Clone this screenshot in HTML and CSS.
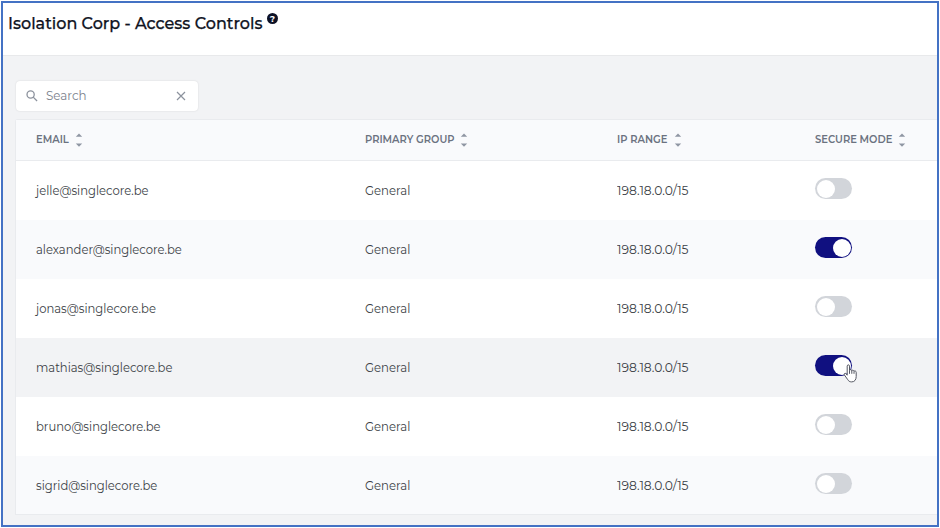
FILE: index.html
```
<!DOCTYPE html>
<html lang="en">
<head>
<meta charset="utf-8">
<title>Isolation Corp - Access Controls</title>
<link rel="stylesheet" href="styles.css">
</head>
<body>
<div class="frame">
  <header class="header">
    <h1 class="title">Isolation Corp - Access Controls</h1>
    <span class="help">?</span>
  </header>
  <main class="content">
    <div class="search">
      <svg class="search-icon" width="12" height="12" viewBox="0 0 13 13"><circle cx="5" cy="4.900" r="3.900"/><path d="M7.800 7.700l4.200 4.200"/></svg>
      <span class="search-text">Search</span>
      <svg class="clear-icon" width="10" height="10" viewBox="0 0 10 10"><path d="M1 1l8 8M9 1l-8 8"/></svg>
    </div>
    <div class="table">
      <div class="row head">
        <div class="cell"><span class="h-email">EMAIL</span><svg class="sort" width="8" height="14" viewBox="0 0 8 14"><path d="M.8 3.8L4 .4l3.200 3.400zM.8 10.400l3.200 3.400 3.200-3.400z"/></svg></div>
        <div class="cell"><span class="h-group">PRIMARY GROUP</span><svg class="sort" width="8" height="14" viewBox="0 0 8 14"><path d="M.8 3.8L4 .4l3.200 3.400zM.8 10.400l3.200 3.400 3.200-3.400z"/></svg></div>
        <div class="cell"><span class="h-range">IP RANGE</span><svg class="sort" width="8" height="14" viewBox="0 0 8 14"><path d="M.8 3.8L4 .4l3.200 3.400zM.8 10.400l3.200 3.400 3.200-3.400z"/></svg></div>
        <div class="cell"><span class="h-mode">SECURE MODE</span><svg class="sort" width="8" height="14" viewBox="0 0 8 14"><path d="M.8 3.8L4 .4l3.200 3.400zM.8 10.400l3.200 3.400 3.200-3.400z"/></svg></div>
      </div>
      <div class="row"><div class="cell"><span class="email">jelle@singlecore.be</span></div><div class="cell"><span class="group">General</span></div><div class="cell"><span class="ip">198.18.0.0/15</span></div><div class="cell"><span class="toggle"></span></div></div>
      <div class="row alt"><div class="cell"><span class="email">alexander@singlecore.be</span></div><div class="cell"><span class="group">General</span></div><div class="cell"><span class="ip">198.18.0.0/15</span></div><div class="cell"><span class="toggle on"></span></div></div>
      <div class="row"><div class="cell"><span class="email">jonas@singlecore.be</span></div><div class="cell"><span class="group">General</span></div><div class="cell"><span class="ip">198.18.0.0/15</span></div><div class="cell"><span class="toggle"></span></div></div>
      <div class="row hover"><div class="cell"><span class="email">mathias@singlecore.be</span></div><div class="cell"><span class="group">General</span></div><div class="cell"><span class="ip">198.18.0.0/15</span></div><div class="cell"><span class="toggle on"><svg class="cursor" width="15" height="19" viewBox="0 0 15 19"><path d="M4.200 11.200V2.100c0-1.700 2.300-1.700 2.300 0v4.400c.3-1.200 2.200-1.100 2.300.3.500-1 2.100-.7 2.200.6.600-.9 2.200-.5 2.200.9v4.200c0 3.200-1.600 5.400-4.500 5.400-2.200 0-3.200-.9-4.200-2.600L1.300 10.800c-.6-1.200.8-2 1.700-1.100zM6.500 6.500v3.300M8.800 6.800v3M11 7.400v2.400"/></svg></span></div></div>
      <div class="row"><div class="cell"><span class="email">bruno@singlecore.be</span></div><div class="cell"><span class="group">General</span></div><div class="cell"><span class="ip">198.18.0.0/15</span></div><div class="cell"><span class="toggle"></span></div></div>
      <div class="row alt"><div class="cell"><span class="email">sigrid@singlecore.be</span></div><div class="cell"><span class="group">General</span></div><div class="cell"><span class="ip">198.18.0.0/15</span></div><div class="cell"><span class="toggle"></span></div></div>
    </div>
  </main>
</div>
</body>
</html>
```
FILE: styles.css
```
* { box-sizing: border-box; }
body {
  margin: 0;
  padding: 1px;
  height: 528px;
  overflow: hidden;
  background: #fff;
  font-family: Montserrat, Inter, sans-serif;
  font-size: 12.5px;
  line-height: 16px;
  color: #3b3f46;
}
.frame {
  width: 938px;
  height: 526px;
  border: 2px solid #4472c4;
  background: #f2f3f5;
  overflow: hidden;
}
.header {
  display: flex;
  align-items: flex-start;
  height: 53px;
  padding: 8px 0 0 5px;
  background: #fff;
  border-bottom: 1px solid #e8e9eb;
}
.title {
  margin: 0;
  font-size: 17px;
  line-height: 24px;
  font-weight: 500;
  color: #10141f;
  -webkit-text-stroke: .25px #10141f;
  white-space: nowrap;
  width: 255px;
  transform: scaleX(.941);
  transform-origin: left;
}
.help {
  width: 11px;
  height: 11px;
  margin: 2px 0 0 4px;
  border-radius: 50%;
  background: #0d1226;
  color: #fff;
  font-size: 9px;
  font-weight: 700;
  line-height: 11px;
  text-align: center;
}
.content { padding: 25px 0 0 12px; }
.search {
  display: flex;
  align-items: center;
  width: 182px;
  height: 30px;
  margin-left: 1px;
  padding: 0 12px 0 10px;
  border-radius: 4px;
  background: #fff;
  box-shadow: 0 0 2px rgba(0, 0, 0, .13);
}
.search svg { fill: none; stroke: #8c929d; stroke-width: 1.4; }
.search .clear-icon { stroke-width: 1.2; margin-left: auto; }
.search-text {
  margin-left: 8px;
  color: #7b818c;
  transform: scaleX(.95);
  transform-origin: left;
}
.table {
  margin-top: 8px;
  border: 1px solid #e9ebee;
  border-right: 0;
  border-radius: 3px 0 0 0;
}
.row {
  display: grid;
  grid-template-columns: 329px 252px 198px 1fr;
  height: 59px;
  padding: 0 0 1px 20px;
  background: #fff;
}
.row:last-child { height: 58px; padding-bottom: 0; }
.cell { display: flex; align-items: center; white-space: nowrap; }
.row.head {
  height: 41px;
  padding-bottom: 1px;
  background: #f9fafc;
  border-bottom: 1px solid #e9ebee;
  color: #6b7280;
  font-size: 10.5px;
  font-weight: 600;
}
.head span { transform: scaleX(.948); transform-origin: left; }
.alt { background: #f9fafc; }
.row.hover { background: #f2f3f5; }
.email, .group, .ip { margin-top: 1px; transform-origin: left; }
.email { transform: scaleX(.927); }
.group { transform: scaleX(.935); }
.ip { transform: scaleX(.985); }
.sort { margin: 1px 0 0 6px; fill: #8f96a3; }
.h-email { width: 33px; }
.h-group { width: 89px; }
.h-range { width: 51px; }
.h-mode { width: 77px; }
.toggle {
  position: relative;
  width: 37px;
  height: 21px;
  margin-bottom: 3px;
  padding: 1.500px;
  border-radius: 11px;
  background: #d2d5da;
}
.toggle::before {
  content: "";
  display: block;
  width: 18px;
  height: 18px;
  border-radius: 50%;
  background: #fff;
}
.on { background: #101080; }
.on::before { margin-left: 16.500px; }
.cursor {
  position: absolute;
  left: 28px;
  top: 8.500px;
  fill: #fff;
  stroke: #555863;
  stroke-width: 1;
  stroke-linejoin: round;
}
```
